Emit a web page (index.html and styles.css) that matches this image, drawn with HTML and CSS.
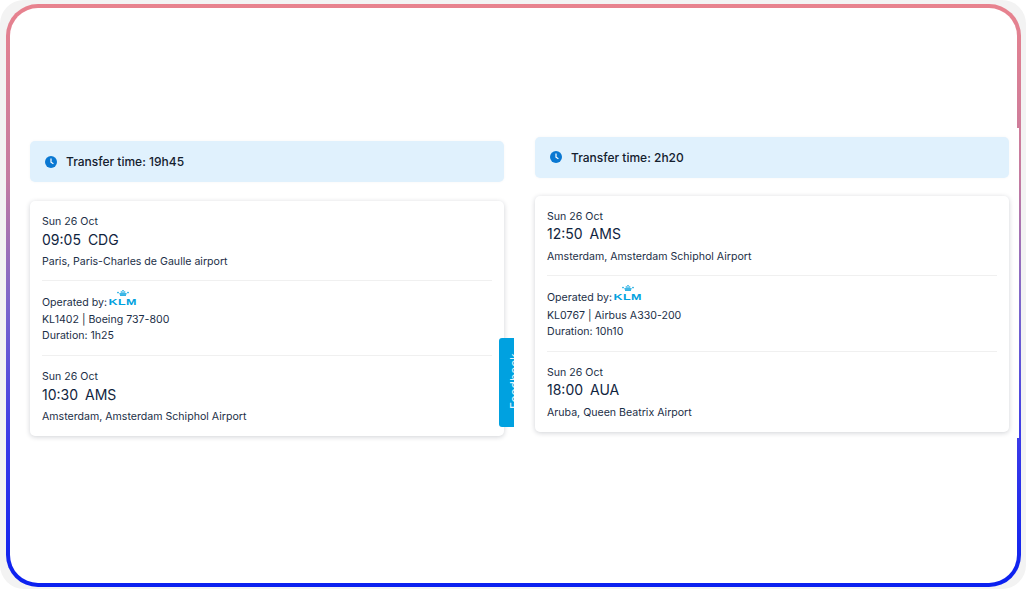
FILE: index.html
```html
<!DOCTYPE html>
<html lang="en">
<head>
<meta charset="utf-8">
<title>Transfer details</title>
<link rel="stylesheet" href="styles.css">
</head>
<body>
<div class="shell">
  <main class="frame">
    <section class="column column-left">
      <div class="banner">
        <svg class="clock" viewBox="0 0 12 12"><circle cx="6" cy="6" r="6" fill="#0a78d2"/><path d="M6 2.6V6.2L8.4 7.8" fill="none" stroke="#fff" stroke-width="1.2"/></svg>
        <span>Transfer time: 19h45</span>
      </div>
      <article class="card">
        <div class="stop">
          <div class="small">Sun 26 Oct</div>
          <div class="time"><span>09:05</span><span>CDG</span></div>
          <div class="small place">Paris, Paris-Charles de Gaulle airport</div>
        </div>
        <div class="flight">
          <div class="small operated">Operated by:
            <span class="klm">
              <svg class="crown" viewBox="0 0 12 6"><g fill="#00a1de"><circle cx="6" cy=".8" r=".8"/><circle cx="4.3" cy="2" r=".7"/><circle cx="6" cy="2.2" r=".7"/><circle cx="7.7" cy="2" r=".7"/><circle cx="1" cy="2.6" r=".8"/><circle cx="11" cy="2.6" r=".8"/><path d="M2.2 3.2h7.6l-.7 1.6H2.9z"/><rect x="3" y="5.2" width="6" height=".8"/></g></svg>
              <span class="klm-text">KLM</span>
            </span>
          </div>
          <div class="small">KL1402 | Boeing 737-800</div>
          <div class="small">Duration: 1h25</div>
        </div>
        <div class="stop">
          <div class="small">Sun 26 Oct</div>
          <div class="time"><span>10:30</span><span>AMS</span></div>
          <div class="small place">Amsterdam, Amsterdam Schiphol Airport</div>
        </div>
      </article>
      <div class="feedback"><span>Feedback</span></div>
    </section>
    <section class="column column-right">
      <div class="banner">
        <svg class="clock" viewBox="0 0 12 12"><circle cx="6" cy="6" r="6" fill="#0a78d2"/><path d="M6 2.6V6.2L8.4 7.8" fill="none" stroke="#fff" stroke-width="1.2"/></svg>
        <span>Transfer time: 2h20</span>
      </div>
      <article class="card">
        <div class="stop">
          <div class="small">Sun 26 Oct</div>
          <div class="time"><span>12:50</span><span>AMS</span></div>
          <div class="small place">Amsterdam, Amsterdam Schiphol Airport</div>
        </div>
        <div class="flight">
          <div class="small operated">Operated by:
            <span class="klm">
              <svg class="crown" viewBox="0 0 12 6"><g fill="#00a1de"><circle cx="6" cy=".8" r=".8"/><circle cx="4.3" cy="2" r=".7"/><circle cx="6" cy="2.2" r=".7"/><circle cx="7.7" cy="2" r=".7"/><circle cx="1" cy="2.6" r=".8"/><circle cx="11" cy="2.6" r=".8"/><path d="M2.2 3.2h7.6l-.7 1.6H2.9z"/><rect x="3" y="5.2" width="6" height=".8"/></g></svg>
              <span class="klm-text">KLM</span>
            </span>
          </div>
          <div class="small">KL0767 | Airbus A330-200</div>
          <div class="small">Duration: 10h10</div>
        </div>
        <div class="stop">
          <div class="small">Sun 26 Oct</div>
          <div class="time"><span>18:00</span><span>AUA</span></div>
          <div class="small place">Aruba, Queen Beatrix Airport</div>
        </div>
      </article>
    </section>
    <div class="edge-mask"></div>
  </main>
</div>
</body>
</html>
```
FILE: styles.css
```css
* { box-sizing: border-box; }
html, body { margin: 0; height: 100%; background: #fff; overflow: hidden; }
body { font-family: Inter, "Liberation Sans", sans-serif; color: #10243e; }
.shell {
  width: 1026px;
  height: 589px;
  padding: 4px 5px 2px 6px;
  background: #f3f3f3;
  border-radius: 24px;
}
.frame {
  position: relative;
  display: flex;
  gap: 31px;
  height: 583px;
  padding: 0 7px 0 20px;
  border: 4px solid transparent;
  border-radius: 32px;
  background:
    linear-gradient(#fff, #fff) padding-box,
    linear-gradient(180deg, #e8828e 0%, #c47ba0 30%, #7a66cc 52%, #3a3ae8 75%, #0a20f0 100%) border-box;
}
.column { position: relative; width: 474px; flex: none; }
.column-left { padding-top: 133px; }
.column-right { padding-top: 129px; }
.banner {
  display: flex;
  align-items: center;
  gap: 9px;
  height: 41px;
  padding-left: 15px;
  background: #e0f1fd;
  border-radius: 5px;
  font-size: 12px;
  font-weight: 500;
  color: #14202e;
  box-shadow: 0 0 3px rgba(0, 0, 0, .04);
}
.column-right .banner { padding-bottom: 1px; }
.clock { width: 12px; height: 12px; flex: none; }
.card {
  margin-top: 19px;
  padding: 0 12px;
  height: 235px;
  background: #fff;
  border-radius: 5px;
  box-shadow: 0 1px 5px rgba(20, 30, 50, .2);
}
.column-right .card { margin-top: 18px; height: 236px; }
.column-right .flight { height: 77px; }
.stop { padding-top: 13px; height: 79px; }
.flight { height: 76px; padding-top: 12px; border-top: 1px solid #f0f0f0; border-bottom: 1px solid #f0f0f0; }
.small { font-size: 10.6px; line-height: 16.5px; color: #1c2f47; }
.flight .small { line-height: 16px; }
.time {
  display: flex;
  gap: 7px;
  margin: -2px 0 5px;
  font-size: 14px;
  line-height: 20px;
  color: #10243e;
}
.column-left .time { margin: -1px 0 4px; }
.flight .operated { display: flex; align-items: flex-end; gap: 3px; height: 18px; margin-bottom: 1.5px; line-height: 16.5px; }
.column-left .flight .operated { margin-bottom: .5px; }
.klm { display: flex; flex-direction: column; align-items: center; width: 26px; margin-bottom: 5px; }
.crown { width: 12px; height: 6px; display: block; margin-bottom: 2px; }
.klm-text {
  font-family: "Liberation Sans", sans-serif;
  font-size: 9.5px;
  font-weight: 700;
  line-height: 8px;
  letter-spacing: .3px;
  color: #00a1de;
  transform: scaleX(1.32);
}
.feedback {
  position: absolute;
  left: 469px;
  top: 330px;
  width: 15px;
  height: 89px;
  overflow: hidden;
  background: #00a1e0;
  border-radius: 3px 0 0 3px;
}
.feedback span {
  position: absolute;
  left: 9px;
  top: 71px;
  font-size: 12px;
  line-height: 14px;
  color: #e6f6fd;
  white-space: nowrap;
  transform-origin: 0 0;
  transform: rotate(-90deg);
}
.edge-mask {
  position: absolute;
  right: -2px;
  top: 120px;
  width: 3px;
  height: 310px;
  background: #fff;
}
```
